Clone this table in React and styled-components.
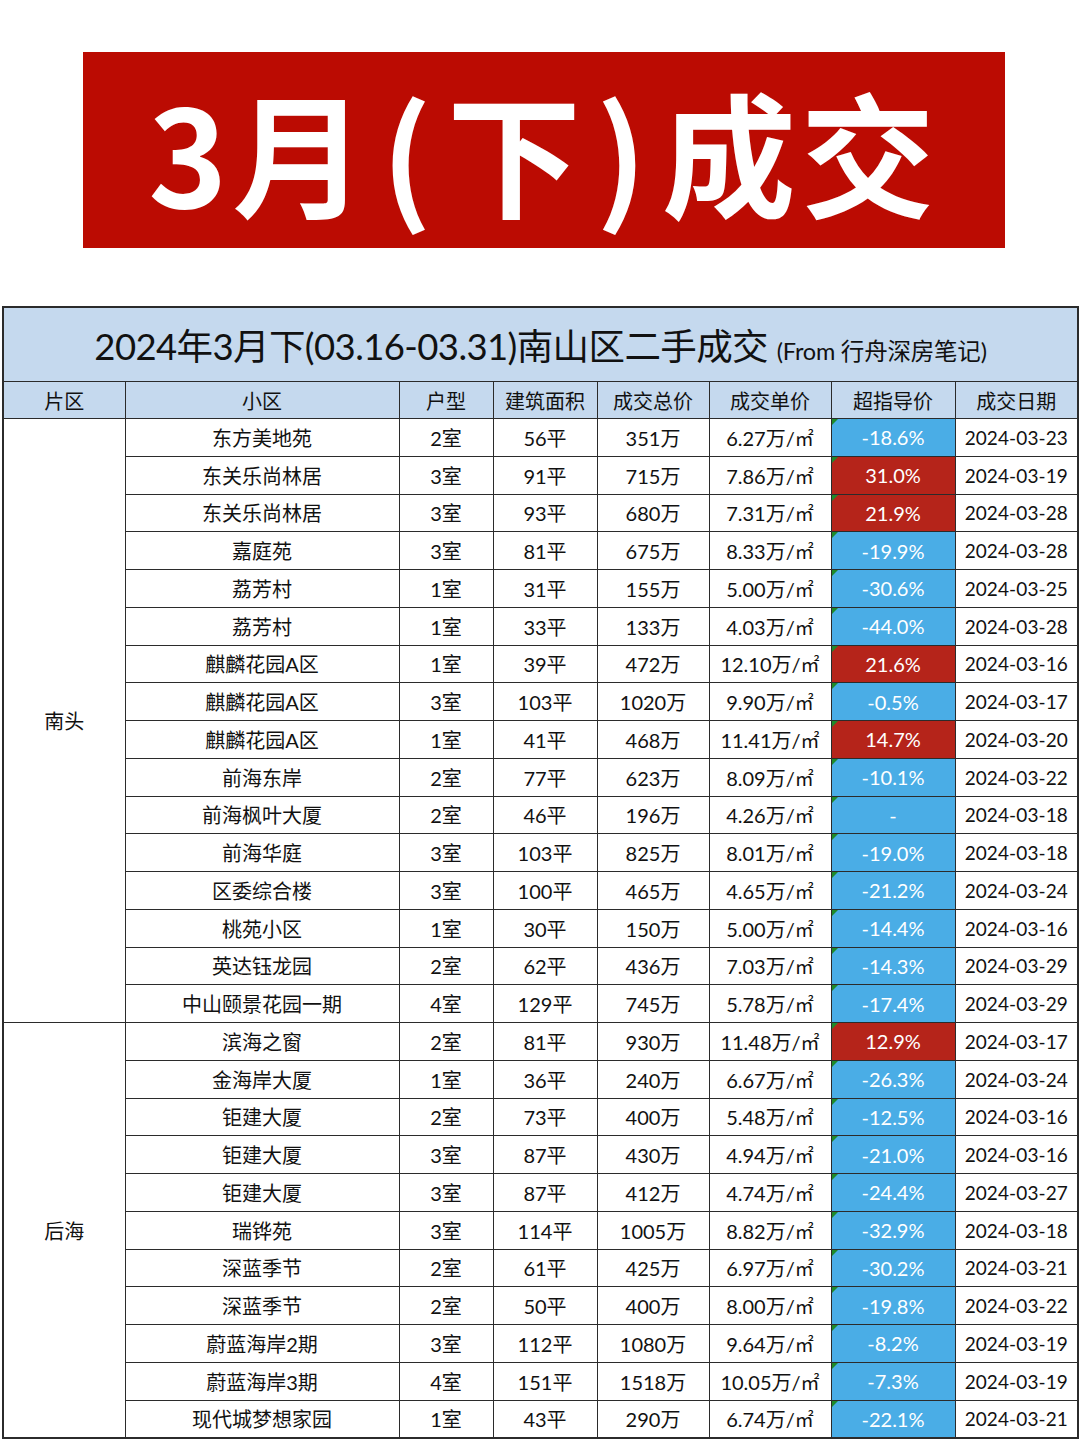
import React from "react";
import styled, { createGlobalStyle } from "styled-components";

const rows = [
  ["东方美地苑", "2室", "56平", "351万", "6.27", "-18.6%", "2024-03-23"],
  ["东关乐尚林居", "3室", "91平", "715万", "7.86", "31.0%", "2024-03-19"],
  ["东关乐尚林居", "3室", "93平", "680万", "7.31", "21.9%", "2024-03-28"],
  ["嘉庭苑", "3室", "81平", "675万", "8.33", "-19.9%", "2024-03-28"],
  ["荔芳村", "1室", "31平", "155万", "5.00", "-30.6%", "2024-03-25"],
  ["荔芳村", "1室", "33平", "133万", "4.03", "-44.0%", "2024-03-28"],
  ["麒麟花园A区", "1室", "39平", "472万", "12.10", "21.6%", "2024-03-16"],
  ["麒麟花园A区", "3室", "103平", "1020万", "9.90", "-0.5%", "2024-03-17"],
  ["麒麟花园A区", "1室", "41平", "468万", "11.41", "14.7%", "2024-03-20"],
  ["前海东岸", "2室", "77平", "623万", "8.09", "-10.1%", "2024-03-22"],
  ["前海枫叶大厦", "2室", "46平", "196万", "4.26", "-", "2024-03-18"],
  ["前海华庭", "3室", "103平", "825万", "8.01", "-19.0%", "2024-03-18"],
  ["区委综合楼", "3室", "100平", "465万", "4.65", "-21.2%", "2024-03-24"],
  ["桃苑小区", "1室", "30平", "150万", "5.00", "-14.4%", "2024-03-16"],
  ["英达钰龙园", "2室", "62平", "436万", "7.03", "-14.3%", "2024-03-29"],
  ["中山颐景花园一期", "4室", "129平", "745万", "5.78", "-17.4%", "2024-03-29"],
  ["滨海之窗", "2室", "81平", "930万", "11.48", "12.9%", "2024-03-17"],
  ["金海岸大厦", "1室", "36平", "240万", "6.67", "-26.3%", "2024-03-24"],
  ["钜建大厦", "2室", "73平", "400万", "5.48", "-12.5%", "2024-03-16"],
  ["钜建大厦", "3室", "87平", "430万", "4.94", "-21.0%", "2024-03-16"],
  ["钜建大厦", "3室", "87平", "412万", "4.74", "-24.4%", "2024-03-27"],
  ["瑞铧苑", "3室", "114平", "1005万", "8.82", "-32.9%", "2024-03-18"],
  ["深蓝季节", "2室", "61平", "425万", "6.97", "-30.2%", "2024-03-21"],
  ["深蓝季节", "2室", "50平", "400万", "8.00", "-19.8%", "2024-03-22"],
  ["蔚蓝海岸2期", "3室", "112平", "1080万", "9.64", "-8.2%", "2024-03-19"],
  ["蔚蓝海岸3期", "4室", "151平", "1518万", "10.05", "-7.3%", "2024-03-19"],
  ["现代城梦想家园", "1室", "43平", "290万", "6.74", "-22.1%", "2024-03-21"],
];

const headers = ["片区", "小区", "户型", "建筑面积", "成交总价", "成交单价", "超指导价", "成交日期"];
const widths = [122, 274, 94, 104, 112, 122, 124, 123];

const GlobalStyle = createGlobalStyle`
  body {
    margin: 0;
    background: #fff;
    font-family: "Lato", "Noto Sans CJK SC", sans-serif;
  }
`;

const Page = styled.div`
  width: 1080px;
  padding-top: 52px;
`;

const Banner = styled.div`
  width: 922px;
  height: 196px;
  margin-left: 83px;
  background: #bb0b02;
  display: flex;
  align-items: center;
  justify-content: center;
  color: #fff;
  font-family: "Noto Sans CJK SC", sans-serif;
  font-weight: 700;
  font-size: 134px;
  line-height: 1;
  letter-spacing: 5px;
`;

const Paren = styled.span`
  margin: 0 ${p => p.$gap}px;
`;

const Table = styled.table`
  margin: 58px 0 0 2px;
  width: 1076px;
  border-collapse: collapse;
  table-layout: fixed;
  border: 2px solid #2b2b2b;
  color: #111;
`;

const TitleCell = styled.th`
  height: 73px;
  background: #c5d9ee;
  font-weight: 400;
  font-size: 36.5px;
  padding: 0;
  border: 1.5px solid #2b2b2b;
  letter-spacing: -0.6px;

  small {
    font-size: 23.5px;
    letter-spacing: -0.2px;
  }
`;

const HeadCell = styled.th`
  height: 36px;
  background: #c5d9ee;
  font-weight: 400;
  font-size: 20px;
  padding: 0;
  border: 1.5px solid #2b2b2b;
`;

const Cell = styled.td`
  height: 36.75px;
  padding: 0;
  text-align: center;
  font-size: 20px;
  border: 1.5px solid #2b2b2b;
  white-space: nowrap;
`;

const DateCell = styled(Cell)`
  font-size: 19px;
  letter-spacing: 0.1px;
`;

const RateCell = styled(Cell)`
  position: relative;
  color: #fff;
  background: ${p => (p.$up ? "#b5241a" : "#4aade6")};

  &::before {
    content: "";
    position: absolute;
    left: 0;
    top: 0;
    border-top: 6px solid #1f8a2a;
    border-right: 6px solid transparent;
  }
`;

const Unit = styled.span`
  font-size: 19px;
`;

export default function App() {
  return (
    <Page>
      <GlobalStyle />
      <Banner>
        3月<Paren $gap={10}>(</Paren>下<Paren $gap={10}>)</Paren>成交
      </Banner>
      <Table>
        <colgroup>
          {widths.map((w, i) => (
            <col key={i} style={{ width: w }} />
          ))}
        </colgroup>
        <thead>
          <tr>
            <TitleCell colSpan={8}>
              2024年3月下(03.16-03.31)南山区二手成交 <small>(From 行舟深房笔记)</small>
            </TitleCell>
          </tr>
          <tr>
            {headers.map(h => (
              <HeadCell key={h}>{h}</HeadCell>
            ))}
          </tr>
        </thead>
        <tbody>
          {rows.map((r, i) => (
            <tr key={i}>
              {i === 0 && <Cell rowSpan={16}>南头</Cell>}
              {i === 16 && <Cell rowSpan={11}>后海</Cell>}
              <Cell>{r[0]}</Cell>
              <Cell>{r[1]}</Cell>
              <Cell>{r[2]}</Cell>
              <Cell>{r[3]}</Cell>
              <Cell>
                {r[4]}万/<Unit>㎡</Unit>
              </Cell>
              <RateCell $up={!r[5].startsWith("-")}>{r[5]}</RateCell>
              <DateCell>{r[6]}</DateCell>
            </tr>
          ))}
        </tbody>
      </Table>
    </Page>
  );
}
